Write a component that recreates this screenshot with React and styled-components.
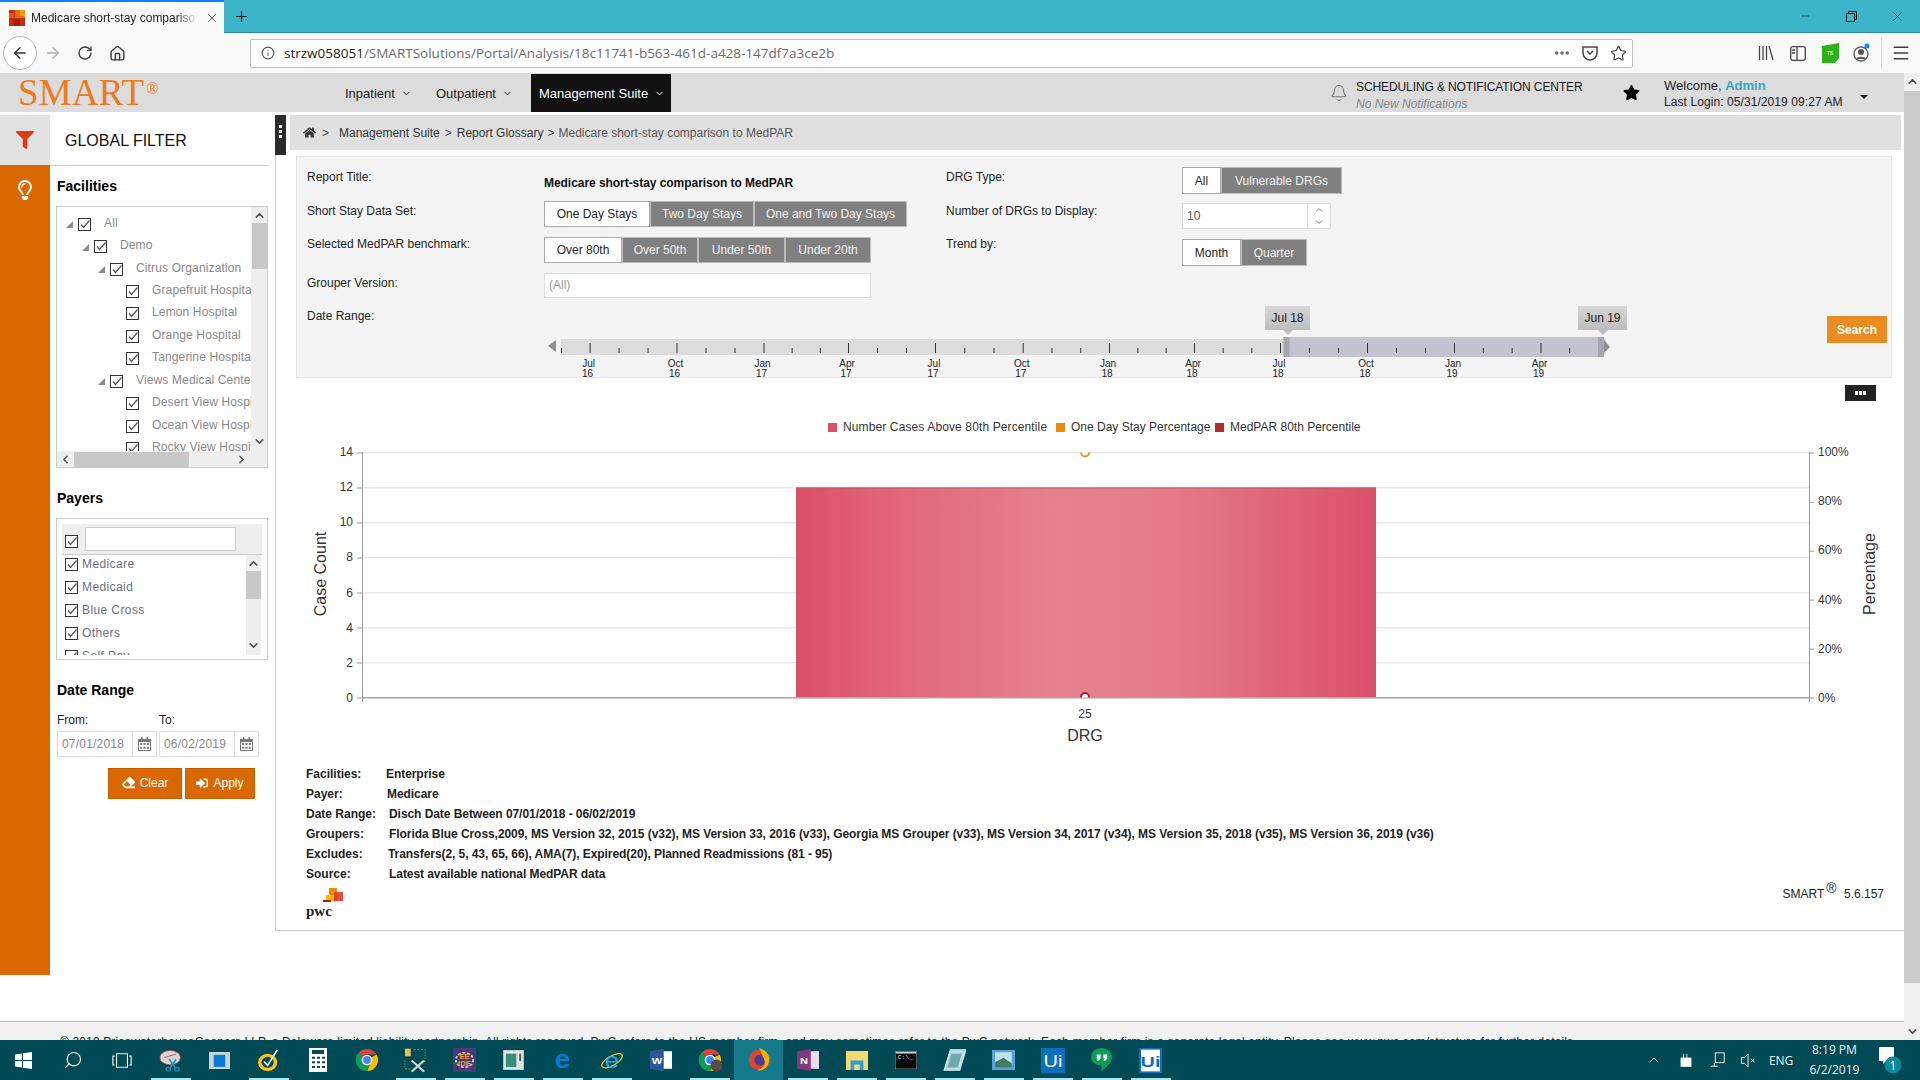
import React from 'react';
import styled, { createGlobalStyle } from 'styled-components';
import { ArrowLeft, ArrowRight, RotateCw, Home, Info, Ellipsis, Star, Menu, Minus, X, ChevronDown, ChevronUp, ChevronLeft, ChevronRight, Plus, Bell, Search as SearchIcon } from 'lucide-react';
import { FaHome, FaFilter, FaRegLightbulb, FaStar, FaEraser, FaSignInAlt } from 'react-icons/fa';

const GlobalStyle = createGlobalStyle`
  html, body { margin: 0; padding: 0; width: 1920px; height: 1080px; overflow: hidden; background: #fff; }
  * { box-sizing: border-box; }
  body { font-family: "Liberation Sans", Arial, sans-serif; font-size: 12px; color: #222; }
`;

const Screen = styled.div`
  width: 1920px;
  height: 1080px;
  display: flex;
  flex-direction: column;
  overflow: hidden;
`;

/* browser chrome */
const TitleBar = styled.div`
  height: 33px;
  flex: none;
  display: flex;
  background: #3cb5c8;
  border-bottom: 1px solid #2b8b9a;
`;
const Tab = styled.div`
  width: 224px;
  height: 33px;
  display: flex;
  align-items: center;
  padding-left: 9px;
  background: #f9f9fa;
  border-top: 2px solid #0a84ff;
  font-size: 12px;
  color: #222;
`;
const TabTitle = styled.div`
  width: 166px;
  margin-left: 6px;
  white-space: nowrap;
  overflow: hidden;
  mask-image: linear-gradient(to right, #000 88%, transparent);
`;
const TabClose = styled.div`
  margin-left: 8px;
  display: flex;
  color: #333;
`;
const NewTab = styled.div`
  width: 34px;
  display: flex;
  align-items: center;
  justify-content: center;
  color: #123;
`;
const WindowButtons = styled.div`
  margin-left: auto;
  display: flex;
`;
const WindowButton = styled.div`
  width: 46px;
  display: flex;
  align-items: center;
  justify-content: center;
  color: #111;
`;
const Toolbar = styled.div`
  height: 40px;
  flex: none;
  display: flex;
  align-items: center;
  background: #f9f9fa;
`;
const BackButton = styled.div`
  width: 34px;
  height: 34px;
  margin-left: 3px;
  border-radius: 50%;
  border: 1px solid #b4b4b4;
  background: #fff;
  display: flex;
  align-items: center;
  justify-content: center;
  color: #333;
`;
const ToolButton = styled.div`
  width: ${p => p.$w || 32}px;
  height: 30px;
  display: flex;
  align-items: center;
  justify-content: center;
  color: ${p => p.$color || '#3c3c3c'};
`;
const UrlBar = styled.div`
  width: 1383px;
  height: 29px;
  margin-left: 117px;
  padding-left: 10px;
  display: flex;
  align-items: center;
  background: #fff;
  border: 1px solid #bebebe;
  border-radius: 2px;
`;
const UrlText = styled.div`
  margin-left: 9px;
  font-family: "Open Sans", sans-serif;
  font-size: 13.5px;
  color: #6b6b6b;
  white-space: nowrap;
  b { font-weight: 400; color: #1a1a1a; }
`;
const UrlTools = styled.div`
  margin-left: auto;
  display: flex;
`;
const ToolGroup = styled.div`
  margin-left: 117px;
  display: flex;
  align-items: center;
`;
const ToolSep = styled.div`
  width: 1px;
  height: 32px;
  margin: 0 3px;
  background: #dcdcdc;
`;

/* page */
const PageArea = styled.div`
  height: 967px;
  flex: none;
  display: flex;
  overflow: hidden;
`;
const Page = styled.div`
  width: 1904px;
  flex: none;
  display: flex;
  flex-direction: column;
`;
const PageScroll = styled.div`
  width: 16px;
  flex: none;
  display: flex;
  flex-direction: column;
  align-items: center;
  background: #f0f0f0;
  color: #505050;
`;
const PageThumb = styled.div`
  width: 16px;
  height: 892px;
  margin-top: 2px;
  background: #cbcbcb;
`;
const PageArrow = styled.div`
  height: 16px;
  display: flex;
  align-items: center;
  margin-top: ${p => p.$top || 0}px;
`;

const Nav = styled.div`
  height: 39px;
  flex: none;
  display: flex;
  align-items: center;
  padding-right: 36px;
  background: #dcdcdc;
`;
const Logo = styled.div`
  width: 319px;
  margin: 1px 0 0 18px;
  font-family: "Liberation Serif", serif;
  font-size: 37px;
  line-height: 38px;
  letter-spacing: 0.2px;
  color: #ee7a1c;
  sup { font-size: 16px; line-height: 0; vertical-align: 11px; margin-left: 2px; }
`;
const NavItem = styled.div`
  width: ${p => p.$w}px;
  height: 38px;
  align-self: flex-end;
  padding-left: 8px;
  display: flex;
  align-items: center;
  gap: 6px;
  font-size: 13px;
  color: ${p => (p.$active ? '#fff' : '#1a1a1a')};
  background: ${p => (p.$active ? '#111' : 'transparent')};
`;
const NavRight = styled.div`
  margin-left: auto;
  display: flex;
  align-items: center;
`;
const Notify = styled.div`
  width: 228px;
  margin: 6px 0 0 8px;
  color: #1a1a1a;
  line-height: 17px;
  letter-spacing: -0.1px;
  white-space: nowrap;
`;
const Muted = styled.div`
  font-style: italic;
  color: #888;
  letter-spacing: 0;
`;
const NavStar = styled.div`
  width: 17px;
  margin-left: 39px;
  display: flex;
`;
const Welcome = styled.div`
  width: 180px;
  margin: 2px 0 0 24px;
  line-height: 17px;
  color: #222;
  font-size: 13px;
  white-space: nowrap;
  b { color: #36a6c6; }
  div { font-size: 12px; letter-spacing: 0.08px; }
`;
const DownCaret = styled.div`
  width: 8px;
  height: 4px;
  margin: 9px 0 0 16px;
  border-left: 4px solid transparent;
  border-right: 4px solid transparent;
  border-top: 4px solid #111;
`;

const BodyRow = styled.div`
  flex: none;
  height: 909px;
  padding-top: 3px;
  display: flex;
  align-items: flex-start;
`;
const Rail = styled.div`
  width: 50px;
  height: 860px;
  flex: none;
  background: #d96800;
`;
const RailTop = styled.div`
  height: 50px;
  display: flex;
  align-items: center;
  justify-content: center;
  background: #e2e2e2;
  color: #e03a10;
`;
const RailIcon = styled.div`
  margin-top: 15px;
  display: flex;
  justify-content: center;
  color: #fff;
`;

/* filter column */
const Side = styled.div`
  position: relative;
  width: 226px;
  height: 816px;
  flex: none;
  padding-left: 6px;
  border-right: 1px solid #ccc;
`;
const SideTitle = styled.div`
  height: 51px;
  margin-left: -6px;
  width: 220px;
  padding: 2px 0 0 15px;
  display: flex;
  align-items: center;
  border-bottom: 1px solid #ccc;
  font-size: 16px;
  color: #111;
`;
const Collapse = styled.div`
  position: absolute;
  top: 0;
  right: -11px;
  width: 11px;
  height: 40px;
  padding-top: 10px;
  display: flex;
  flex-direction: column;
  align-items: center;
  gap: 2px;
  background: #2b2b2b;
  i { width: 3px; height: 3px; background: #fff; }
`;
const SideHead = styled.div`
  height: 20px;
  margin: ${p => p.$top}px 0 10px 1px;
  font-size: 14px;
  font-weight: 700;
  line-height: 20px;
  color: #000;
`;
const TreeBox = styled.div`
  width: 212px;
  height: 262px;
  display: grid;
  grid-template-columns: 194px 16px;
  grid-template-rows: 244px 16px;
  border: 1px solid #ccc;
`;
const TreeView = styled.div`
  padding-top: 5px;
  overflow: hidden;
`;
const TreeRow = styled.div`
  height: 22.45px;
  padding-left: ${p => 9 + p.$depth * 16}px;
  display: flex;
  align-items: center;
  white-space: nowrap;
  color: #888;
  letter-spacing: 0.14px;
`;
const Twisty = styled.svg`
  width: 12px;
  height: 7px;
  flex: none;
  fill: #8a8a8a;
  margin-top: 3px;
`;
const CheckBox = styled.span`
  width: 13px;
  height: 13px;
  flex: none;
  display: flex;
  background: #fff;
  border: 1px solid #333;
  margin-top: ${p => p.$top || 0}px;
`;
const TreeLabel = styled.span`
  margin: -1px 0 0 13px;
`;
const VBar = styled.div`
  display: flex;
  flex-direction: column;
  align-items: center;
  background: #eee;
  color: #555;
`;
const ScrollArrow = styled.div`
  height: 16px;
  flex: none;
  display: flex;
  align-items: center;
  margin-top: ${p => p.$top || 0}px;
`;
const VThumb = styled.div`
  width: 15px;
  height: ${p => p.$h}px;
  flex: none;
  background: #c8c8c8;
`;
const HBar = styled.div`
  display: flex;
  align-items: center;
  background: #eee;
  color: #555;
`;
const HThumb = styled.div`
  width: 115px;
  height: 15px;
  flex: none;
  margin: 0 46px 0 2px;
  background: #c8c8c8;
`;
const ScrollSide = styled.div`
  width: 13px;
  flex: none;
  margin-left: ${p => p.$left || 0}px;
  display: flex;
  justify-content: center;
`;
const Corner = styled.div`
  background: #eee;
`;
const PayerBox = styled.div`
  width: 212px;
  height: 142px;
  padding: 5px;
  border: 1px solid #ccc;
`;
const PayerHead = styled.div`
  height: 31px;
  padding: 3px 0 0 3px;
  display: flex;
  background: #eee;
  border-bottom: 1px solid #ccc;
`;
const PayerInput = styled.div`
  width: 151px;
  height: 24px;
  margin-left: 7px;
  background: #fff;
  border: 1px solid #ccc;
`;
const PayerBody = styled.div`
  display: flex;
  height: 100px;
`;
const PayerList = styled.div`
  flex: 1;
  padding: 3px 0 0 3px;
  overflow: hidden;
`;
const PayerRow = styled.div`
  height: 23px;
  display: flex;
  align-items: flex-start;
  color: #6a7080;
  letter-spacing: 0.4px;
  span:last-child { margin: -1px 0 0 4px; }
`;
const PayerBar = styled(VBar)`
  width: 15px;
  margin-right: 1px;
`;
const DateLabels = styled.div`
  display: flex;
  margin: 13px 0 4px 1px;
  line-height: 14px;
  color: #222;
  span { width: 102px; }
`;
const DateRow = styled.div`
  display: flex;
  gap: 2px;
  margin-left: 1px;
`;
const DateField = styled.div`
  width: 100px;
  height: 26px;
  display: flex;
  border: 1px solid #ddd;
  color: #888;
  letter-spacing: 0.2px;
`;
const DateText = styled.div`
  width: 75px;
  padding-left: 4px;
  line-height: 24px;
  border-right: 1px solid #ddd;
`;
const DateIcon = styled.div`
  flex: 1;
  display: flex;
  align-items: center;
  justify-content: center;
`;
const ButtonRow = styled.div`
  display: flex;
  gap: 3px;
  margin: 11px 0 0 52px;
`;
const OrangeButton = styled.div`
  width: ${p => p.$w}px;
  height: 31px;
  padding-bottom: 2px;
  display: flex;
  align-items: center;
  justify-content: center;
  gap: 5px;
  background: #d96800;
  border: 1px solid #c96000;
  color: #fff;
`;

/* main column */
const Main = styled.div`
  width: 1628px;
  height: 816px;
  flex: none;
  border-bottom: 1px solid #ccc;
  display: flex;
  flex-direction: column;
`;
const Crumbs = styled.div`
  height: 35px;
  flex: none;
  margin: 0 3px 0 14px;
  padding-left: 13px;
  display: flex;
  align-items: center;
  background: #e0e0e0;
  color: #333;
  white-space: nowrap;
`;
const CrumbSep = styled.span`
  margin: 0 ${p => p.$gap || 5}px;
  color: #444;
`;
const CrumbHome = styled.span`
  display: flex;
  margin-right: 1px;
  color: #333;
`;
const CrumbFirst = styled.span`
  margin-left: 5px;
`;
const CrumbLast = styled.span`
  color: #555;
`;
const FilterPanel = styled.div`
  height: 222px;
  flex: none;
  margin: 6px 12px 0 20px;
  padding: 10px 0 0 10px;
  display: flex;
  flex-direction: column;
  background: #f4f4f4;
  border: 1px solid #e4e4e4;
`;
const FormTop = styled.div`
  height: 139px;
  flex: none;
  display: flex;
`;
const FormCol = styled.div`
  width: ${p => p.$w}px;
  flex: none;
`;
const FormRow = styled.div`
  height: ${p => p.$h}px;
  display: flex;
`;
const FormLabel = styled.div`
  width: ${p => p.$w || 237}px;
  flex: none;
  padding-top: ${p => p.$top}px;
  line-height: 14px;
  color: #222;
`;
const ReportName = styled.div`
  padding-top: 9px;
  line-height: 14px;
  font-weight: 700;
  letter-spacing: -0.05px;
  color: #111;
`;
const SegGroup = styled.div`
  display: flex;
  height: ${p => p.$h}px;
  margin-top: ${p => p.$top || 0}px;
`;
const Seg = styled.div`
  width: ${p => p.$w}px;
  display: flex;
  align-items: center;
  justify-content: center;
  background: ${p => (p.$on ? '#fff' : '#808080')};
  color: ${p => (p.$on ? '#222' : '#f2f2f2')};
  border: 1px solid ${p => (p.$on ? '#aaa' : '#bcbcbc')};
`;
const GrouperInput = styled.div`
  width: 327px;
  height: 25px;
  padding-left: 4px;
  line-height: 23px;
  background: #fff;
  border: 1px solid #ddd;
  color: #999;
`;
const Spinner = styled.div`
  width: 149px;
  height: 26px;
  display: flex;
  background: #fff;
  border: 1px solid #ddd;
  color: #555;
`;
const SpinValue = styled.div`
  width: 125px;
  padding-left: 4px;
  line-height: 24px;
  border-right: 1px solid #ddd;
`;
const SpinArrows = styled.div`
  flex: 1;
  display: flex;
  flex-direction: column;
  align-items: center;
  justify-content: center;
`;
const SliderRow = styled.div`
  flex: 1;
  display: flex;
`;
const SliderLabel = styled.div`
  width: 241px;
  flex: none;
  padding-top: 3px;
  line-height: 14px;
  color: #222;
`;
const SliderBox = styled.div`
  position: relative;
  width: 1075px;
  flex: none;
  padding-top: 27px;
  svg { display: block; }
`;
const SliderTip = styled.div`
  position: absolute;
  top: 0;
  left: ${p => p.$left}px;
  width: ${p => p.$w}px;
  height: 24px;
  display: flex;
  align-items: center;
  justify-content: center;
  background: linear-gradient(#d6d6d6, #bdbdbd);
  color: #222;
  &::after {
    content: '';
    position: absolute;
    left: 50%;
    bottom: -5px;
    margin-left: -5px;
    border-left: 5px solid transparent;
    border-right: 5px solid transparent;
    border-top: 5px solid #bdbdbd;
  }
`;
const SearchButton = styled.div`
  width: 60px;
  height: 27px;
  margin: 10px 0 0 204px;
  display: flex;
  align-items: center;
  justify-content: center;
  background: #e98c22;
  color: #fff;
  font-weight: 700;
  font-size: 12px;
`;
const DotsRow = styled.div`
  display: flex;
  justify-content: flex-end;
  margin-top: 7px;
  padding-right: 28px;
`;
const DotsButton = styled.div`
  width: 31px;
  height: 16px;
  display: flex;
  align-items: center;
  justify-content: center;
  gap: 1px;
  background: #222;
  i { width: 3px; height: 4px; background: #fff; }
`;
const Legend = styled.div`
  height: 14px;
  margin-top: 19px;
  padding-left: 552px;
  display: flex;
  align-items: center;
  color: #333;
  line-height: 14px;
  white-space: nowrap;
`;
const LegendItem = styled.div`
  display: flex;
  align-items: center;
  gap: 6px;
  width: ${p => p.$w}px;
  letter-spacing: ${p => p.$ls || 0}px;
`;
const LegendMark = styled.i`
  width: 9px;
  height: 9px;
  background: ${p => p.$color};
`;
const ChartSvg = styled.svg`
  display: block;
  margin-top: 6px;
  flex: none;
  font-family: "Liberation Sans", Arial, sans-serif;
`;
const InfoBlock = styled.div`
  margin-top: 14px;
  padding-left: 30px;
`;
const InfoRow = styled.div`
  height: 20px;
  display: flex;
  align-items: center;
  font-weight: 700;
  color: #222;
  white-space: nowrap;
`;
const InfoKey = styled.div`
  width: ${p => p.$w}px;
  flex: none;
`;
const InfoValue = styled.div`
  letter-spacing: -0.06px;
`;
const MainFoot = styled.div`
  height: 42px;
  padding: 4px 20px 0 30px;
  display: flex;
  justify-content: space-between;
`;
const PwcText = styled.text`
  font-family: "Liberation Serif", serif;
  font-weight: 700;
  font-size: 15px;
`;
const Version = styled.div`
  margin-top: -1px;
  color: #222;
  white-space: nowrap;
  sup { font-size: 14px; line-height: 0; margin: 0 4px 0 2px; }
`;
const Legal = styled.div`
  flex: none;
  padding: 13px 0 0 60px;
  height: 40px;
  background: #f1f1f1;
  border-top: 1px solid #bbb;
  color: #222;
  letter-spacing: 0.14px;
  white-space: nowrap;
`;

/* taskbar */
const Taskbar = styled.div`
  height: 40px;
  flex: none;
  display: flex;
  background: #004a56;
  color: #fff;
`;
const TaskSlot = styled.div`
  position: relative;
  width: 49px;
  height: 40px;
  flex: none;
  display: flex;
  align-items: center;
  justify-content: center;
  background: ${p => (p.$active ? '#147a8c' : 'transparent')};
  &:first-child { margin-left: -1px; }
  &::after {
    content: '';
    display: ${p => (p.$running ? 'block' : 'none')};
    position: absolute;
    left: 5px;
    right: 4px;
    bottom: 0;
    height: 2px;
    background: #a6e6ee;
  }
`;
const Tray = styled.div`
  margin-left: auto;
  width: 281px;
  padding-right: 18px;
  display: flex;
  align-items: center;
  font-family: "Open Sans", sans-serif;
  font-size: 12px;
  color: #e8f2f3;
`;
const TrayIcon = styled.div`
  width: ${p => p.$w}px;
  display: flex;
  justify-content: center;
`;
const Clock = styled.div`
  width: 66px;
  margin-left: 4px;
  text-align: center;
  line-height: 20px;
`;
const TrayNote = styled.div`
  margin-left: 11px;
  display: flex;
`;

const Tick = () => (
  <svg width="11" height="11" viewBox="0 0 11 11">
    <path d="M2 5.5 L4.5 8.5 L10.5 1.5" fill="none" stroke="#555" strokeWidth="1.2" />
  </svg>
);

const Check = ({ top }) => (
  <CheckBox $top={top}><Tick /></CheckBox>
);

const ThinArrow = ({ up }) => (up ? <ChevronUp size={13} strokeWidth={3} /> : <ChevronDown size={13} strokeWidth={3} />);

const Calendar = () => (
  <svg width="13" height="14" viewBox="0 0 13 14" fill="#777">
    <path d="M0 2h13v12H0z M1 5v8h11V5z" fillRule="evenodd" />
    <path d="M3 0h1.5v3H3zM8.5 0H10v3H8.5z" />
    <path d="M2.2 6h2v2h-2zM5.5 6h2v2h-2zM8.8 6h2v2h-2zM2.2 9.700h2v2h-2zM5.5 9.700h2v2h-2zM8.800 9.700h2v2h-2z" />
  </svg>
);

const treeRows = [
  { depth: 0, text: 'All', open: true },
  { depth: 1, text: 'Demo', open: true },
  { depth: 2, text: 'Citrus Organization', open: true },
  { depth: 2, text: 'Grapefruit Hospital', leaf: true },
  { depth: 2, text: 'Lemon Hospital', leaf: true },
  { depth: 2, text: 'Orange Hospital', leaf: true },
  { depth: 2, text: 'Tangerine Hospital', leaf: true },
  { depth: 2, text: 'Views Medical Center', open: true },
  { depth: 2, text: 'Desert View Hospital', leaf: true },
  { depth: 2, text: 'Ocean View Hospital', leaf: true },
  { depth: 2, text: 'Rocky View Hospital', leaf: true },
];

const payers = ['Medicare', 'Medicaid', 'Blue Cross', 'Others', 'Self Pay'];

const sliderTicks = [
  [589.6, 'Jul', '16'], [676.5, 'Oct', '16'], [763.5, 'Jan', '17'], [848, 'Apr', '17'],
  [935, 'Jul', '17'], [1022.7, 'Oct', '17'], [1109, 'Jan', '18'], [1194, 'Apr', '18'],
  [1280, 'Jul', '18'], [1367, 'Oct', '18'], [1454, 'Jan', '19'], [1540.5, 'Apr', '19'],
];

const SliderScale = () => {
  const sx = x => x - 548;
  const minors = [561];
  sliderTicks.forEach(([x], i) => {
    const next = sliderTicks[i + 1] ? sliderTicks[i + 1][0] : x + 86;
    minors.push(x + (next - x) / 3);
    if (i < sliderTicks.length - 1) minors.push(x + ((next - x) * 2) / 3);
  });
  return (
    <svg width="1075" height="44" viewBox="0 0 1075 44">
      <rect x="13" y="6" width="1045" height="16" fill="#dcdcdc" />
      <rect x="735.500" y="4" width="320.500" height="20" fill="#c3c4d0" />
      <polygon points="0,13 8,7 8,19" fill="#8f8f8f" />
      {minors.map(x => <rect key={x} x={sx(x)} y="15" width="1" height="5" fill="#333" />)}
      {sliderTicks.map(([x, m, y]) => (
        <g key={x}>
          <rect x={sx(x)} y="10" width="1" height="10" fill="#333" />
          <text x={sx(x) - 1} y="33.500" fontSize="10" textAnchor="middle" fill="#222">{m}</text>
          <text x={sx(x) - 2} y="43.500" fontSize="10" textAnchor="middle" fill="#222">{y}</text>
        </g>
      ))}
      <rect x="735.500" y="4" width="6" height="20" fill="#a5a6ae" />
      <rect x="1050" y="4" width="6" height="20" fill="#a5a6ae" />
      <polygon points="1056,7 1062,14 1056,20" fill="#8f8f8f" />
    </svg>
  );
};

const ChartArea = () => {
  const cx = x => x - 276;
  const cy = y => y - 440;
  const counts = [14, 12, 10, 8, 6, 4, 2, 0];
  const pct = [[100, 452.5, 451.8], [80, 501.8, 501], [60, 550.7, 549.6], [40, 599.6, 599.6], [20, 648.6, 648.6], [0, 697.5, 697.5]];
  const yOf = v => 697.5 - v * 17.5;
  return (
    <ChartSvg width="1627" height="310" viewBox="0 0 1627 310">
      <defs>
        <linearGradient id="barFill" x1="0" x2="1" y1="0" y2="0">
          <stop offset="0" stopColor="#da4e68" />
          <stop offset="0.15" stopColor="#e0647a" />
          <stop offset="0.45" stopColor="#e6828f" />
          <stop offset="0.65" stopColor="#e47a8a" />
          <stop offset="1" stopColor="#da5069" />
        </linearGradient>
        <clipPath id="plotClip">
          <rect x={cx(362)} y={cy(452.5)} width="1447" height="245" />
        </clipPath>
      </defs>
      {counts.map(v => (
        <g key={v}>
          <rect x={cx(362)} y={cy(yOf(v)) - 0.5} width="1447" height="1.5" fill="#e8e8e8" />
          <rect x={cx(357)} y={cy(yOf(v))} width="5" height="1" fill="#999" />
          <text x={cx(353)} y={cy(yOf(v)) + (v > 6 ? 3.500 : 4.500)} fontSize="12" textAnchor="end" fill="#333">{v}</text>
        </g>
      ))}
      <rect x={cx(796)} y={cy(487.5)} width="580" height="210" fill="url(#barFill)" />
      <rect x={cx(796)} y={cy(487.5)} width="580" height="1" fill="#c9586c" />
      <rect x={cx(362)} y={cy(697)} width="1447" height="1.5" fill="#a8a8a8" />
      <rect x={cx(362)} y={cy(452)} width="1" height="250" fill="#999" />
      <rect x={cx(1809)} y={cy(452)} width="1" height="250" fill="#999" />
      {pct.map(([v, y, ly]) => (
        <g key={v}>
          <rect x={cx(1809)} y={cy(y)} width="5" height="1" fill="#999" />
          <text x={cx(1818)} y={cy(ly) + 4} fontSize="12" fill="#333">{v}%</text>
        </g>
      ))}
      <g clipPath="url(#plotClip)" fill="#fff" strokeWidth="2">
        <circle cx={cx(1085)} cy={cy(452.5)} r="4" stroke="#e8941f" />
        <circle cx={cx(1085)} cy={cy(697)} r="4" stroke="#a8232f" />
      </g>
      <text x={cx(1085)} y={cy(718)} fontSize="12" textAnchor="middle" fill="#333">25</text>
      <text x={cx(1085)} y={cy(741)} fontSize="16" textAnchor="middle" fill="#333">DRG</text>
      <text transform={`translate(${cx(326)} ${cy(574)}) rotate(-90)`} fontSize="16" textAnchor="middle" fill="#333">Case Count</text>
      <text transform={`translate(${cx(1875)} ${cy(574)}) rotate(-90)`} fontSize="16" textAnchor="middle" fill="#333">Percentage</text>
    </ChartSvg>
  );
};

const PwcLogo = () => (
  <svg width="40" height="32" viewBox="0 0 40 32">
    <rect x="23" y="0" width="8" height="13" fill="#eb8c00" />
    <rect x="28" y="4" width="9" height="9" fill="#e0301e" opacity="0.85" />
    <rect x="20" y="7" width="8" height="6" fill="#ffb600" />
    <rect x="17" y="12" width="8" height="2" fill="#a32020" />
    <PwcText x="0" y="28" fill="#222">pwc</PwcText>
  </svg>
);

/* taskbar glyphs, drawn wide and squeezed to the size the reference shows */
const Glyph = ({ w, h, vw, vh, children }) => (
  <svg width={w} height={h} viewBox={`0 0 ${vw} ${vh}`} preserveAspectRatio="none">{children}</svg>
);

const Win = () => (
  <svg width="17" height="17" viewBox="0 0 17 17" fill="#fff">
    <path d="M0 2.400 7 1.400V8H0zM8 1.200 17 0V8H8zM0 9h7v6.600L0 14.600zM8 9h9v8L8 15.800z" />
  </svg>
);
const TaskView = () => (
  <Glyph w={20} h={15} vw={22} vh={20}>
    <g fill="none" stroke="#fff" strokeWidth="1.200">
      <rect x="5" y="1" width="12" height="18" />
      <path d="M3 4H1v12h2M19 4h2v12h-2" />
    </g>
  </Glyph>
);
const Snip = () => (
  <Glyph w={24} h={23} vw={28} vh={32}>
    <ellipse cx="13" cy="12" rx="12" ry="10" fill="#d6d6d6" stroke="#c43a3a" strokeWidth="1" />
    <path d="M6 12 20 7" stroke="#c43a3a" />
    <path d="M12 14 20 28M20 14 12 28" stroke="#1d8fc0" strokeWidth="2" />
    <circle cx="11" cy="28" r="2.500" fill="none" stroke="#1d8fc0" strokeWidth="1.500" />
    <circle cx="21" cy="28" r="2.500" fill="none" stroke="#1d8fc0" strokeWidth="1.500" />
  </Glyph>
);
const BlueWin = () => (
  <Glyph w={21} h={17} vw={22} vh={24}>
    <rect width="22" height="24" fill="#c9d3d8" />
    <rect x="5" y="4" width="12" height="17" fill="#0a78d7" />
  </Glyph>
);
const Norton = () => (
  <Glyph w={21} h={22} vw={24} vh={28}>
    <circle cx="11" cy="17" r="9" fill="none" stroke="#ffc20e" strokeWidth="4" />
    <path d="M7 16 11 21 22 1" fill="none" stroke="#fff" strokeWidth="1.800" />
  </Glyph>
);
const Calc = () => (
  <Glyph w={18} h={24} vw={18} vh={36}>
    <path fill="#fff" d="M0 0h18v36H0z M3 3v6h12V3z M3 13v3h3v-3z M8 13v3h3v-3z M13 13v3h3v-3z M3 20v3h3v-3z M8 20v3h3v-3z M13 20v3h3v-3z M3 27v3h3v-3z M8 27v3h3v-3z M13 27v3h3v-3z" fillRule="evenodd" />
  </Glyph>
);
const Chrome = ({ person }) => (
  <svg width="24" height="24" viewBox="0 0 26 26">
    <path d="M13 1A12 12 0 0 1 23.400 7H13a6 6 0 0 0-5.200 3L4.500 4.500A12 12 0 0 1 13 1z" fill="#db4437" />
    <path d="M23.400 7A12 12 0 0 1 13 25l4-9a6 6 0 0 0 1-6z" fill="#fbbc05" />
    <path d="M13 25A12 12 0 0 1 4.500 4.500L8 10a6 6 0 0 0 8 6.600z" fill="#0f9d58" />
    <circle cx="13" cy="13" r="5" fill="#4285f4" stroke="#fff" strokeWidth="1.500" />
    {person && <circle cx="20" cy="19" r="6.500" fill="#5a4a44" />}
  </svg>
);
const Tools = () => (
  <Glyph w={23} h={25} vw={24} vh={36}>
    <rect x="1" y="1" width="6" height="11" fill="#e8c24a" />
    <path d="M10 2h12v18M1 18v12h8" fill="none" stroke="#7dbb42" strokeDasharray="2 2" />
    <path d="M8 34 21 18M21 34 8 18" stroke="#d8d8d8" strokeWidth="2.500" />
  </Glyph>
);
const JavaEE = () => (
  <Glyph w={23} h={24} vw={24} vh={30}>
    <rect width="24" height="30" fill="#4a3a78" />
    <circle cx="12" cy="15" r="9" fill="none" stroke="#ccc" strokeWidth="2" strokeDasharray="3 2" />
    <text x="12" y="14" fontSize="8" fontWeight="700" textAnchor="middle" fill="#f59a23">EE</text>
    <text x="12" y="22" fontSize="8" fontWeight="700" textAnchor="middle" fill="#f59a23">IDE</text>
  </Glyph>
);
const GreenWin = () => (
  <Glyph w={21} h={20} vw={22} vh={27}>
    <rect width="22" height="27" fill="#dfe6e6" stroke="#999" />
    <rect x="3" y="5" width="11" height="18" fill="#3a8c7d" />
    <rect x="17" y="5" width="2" height="10" fill="#555" />
  </Glyph>
);
const Edge = () => (
  <Glyph w={21} h={24} vw={24} vh={30}>
    <text x="12" y="25" fontSize="32" fontWeight="700" textAnchor="middle" fill="#0a78d7">e</text>
  </Glyph>
);
const Ie = () => (
  <Glyph w={24} h={24} vw={28} vh={32}>
    <ellipse cx="14" cy="17" rx="14" ry="6" fill="none" stroke="#f0c020" strokeWidth="1.500" transform="rotate(-35 14 17)" />
    <text x="14" y="26" fontSize="30" textAnchor="middle" fill="#2aa6e0">e</text>
  </Glyph>
);
const Word = () => (
  <Glyph w={22} h={22} vw={24} vh={30}>
    <rect x="10" y="3" width="14" height="24" fill="#fff" />
    <path d="M0 3 15 0V30L0 27z" fill="#2b579a" />
    <text x="7.500" y="20" fontSize="12" fontWeight="700" textAnchor="middle" fill="#fff">W</text>
  </Glyph>
);
const Firefox = () => (
  <svg width="24" height="24" viewBox="0 4 24 26">
    <circle cx="12" cy="17" r="11" fill="#e0452c" />
    <circle cx="13" cy="17" r="6" fill="#4a3a9a" />
    <path d="M12 4C20 6 26 14 22 22 20 27 14 29 10 28 18 26 20 20 17 15 15 11 14 8 12 4z" fill="#ffb000" />
  </svg>
);
const OneNote = () => (
  <Glyph w={22} h={22} vw={24} vh={30}>
    <rect x="10" y="3" width="14" height="24" fill="#e8dcee" />
    <path d="M0 3 15 0V30L0 27z" fill="#80397b" />
    <text x="7.500" y="20" fontSize="12" fontWeight="700" textAnchor="middle" fill="#fff">N</text>
  </Glyph>
);
const Explorer = () => (
  <Glyph w={22} h={19} vw={24} vh={28}>
    <rect width="24" height="28" fill="#f8d775" />
    <rect x="5" y="14" width="14" height="14" fill="#2a9fd8" />
    <rect x="9" y="20" width="6" height="8" fill="#f8d775" />
  </Glyph>
);
const Cmd = () => (
  <Glyph w={22} h={18} vw={24} vh={28}>
    <rect width="24" height="28" fill="#0b0b0b" stroke="#bbb" />
    <rect x="1" y="1" width="22" height="3" fill="#cfcfcf" />
    <text x="3" y="13" fontSize="7" fontFamily="Liberation Mono" fill="#ddd">C:\_</text>
  </Glyph>
);
const Note = () => (
  <Glyph w={23} h={22} vw={22} vh={32}>
    <path d="M7 1h15l-6 30H1z" fill="#b8dfe6" stroke="#ddeff2" />
    <path d="M8 7h10l-4 20H4z" fill="#6fa8b0" />
  </Glyph>
);
const Photo = () => (
  <Glyph w={23} h={20} vw={22} vh={28}>
    <rect width="22" height="28" fill="#5aa0d8" />
    <rect x="3" y="3" width="16" height="22" fill="#bfe0e8" />
    <path d="M3 17 11 11 19 19V25H3z" fill="#3d7d66" />
  </Glyph>
);
const UiBlue = () => (
  <Glyph w={24} h={25} vw={24} vh={31}>
    <rect width="24" height="31" fill="#0a6fbe" />
    <text x="12" y="23" fontSize="20" textAnchor="middle" fill="#fff">Ui</text>
  </Glyph>
);
const Hangouts = () => (
  <Glyph w={21} h={24} vw={22} vh={30}>
    <path d="M11 0a11 11 0 0 1 11 11c0 8-6 13-11 18V22A11 11 0 0 1 11 0z" fill="#0f9d58" />
    <path d="M6 8h4v5l-2 3H6l1-3H6zM13 8h4v5l-2 3h-2l1-3h-1z" fill="#fff" />
  </Glyph>
);
const UiWhite = () => (
  <Glyph w={23} h={25} vw={22} vh={31}>
    <rect x="1" y="1" width="20" height="29" fill="#fff" stroke="#0a6fbe" strokeWidth="2" />
    <text x="11" y="23" fontSize="19" fontWeight="700" textAnchor="middle" fill="#0a6fbe">Ui</text>
  </Glyph>
);
const SearchGlyph = () => <SearchIcon size={20} strokeWidth={1.4} color="#fff" transform="scale(-1 1)" />;
const PersonChrome = () => <Chrome person />;

const taskItems = [
  { Icon: Win },
  { Icon: SearchGlyph },
  { Icon: TaskView },
  { Icon: Snip, running: true },
  { Icon: BlueWin },
  { Icon: Norton, running: true },
  { Icon: Calc },
  { Icon: Chrome },
  { Icon: Tools, running: true },
  { Icon: JavaEE, running: true },
  { Icon: GreenWin, running: true },
  { Icon: Edge, running: true },
  { Icon: Ie, running: true },
  { Icon: Word },
  { Icon: PersonChrome, running: true },
  { Icon: Firefox, active: true },
  { Icon: OneNote, running: true },
  { Icon: Explorer, running: true },
  { Icon: Cmd, running: true },
  { Icon: Note, running: true },
  { Icon: Photo, running: true },
  { Icon: UiBlue, running: true },
  { Icon: Hangouts, running: true },
  { Icon: UiWhite, running: true },
];

const App = () => (
  <Screen>
    <GlobalStyle />
    <TitleBar>
      <Tab>
        <svg width="16" height="16" viewBox="0 0 16 16">
          <rect width="16" height="16" fill="#c92a08" />
          <rect width="10" height="8" x="6" fill="#e8700c" />
          <rect width="5" height="6" x="11" fill="#f09a18" />
          <rect width="5" height="5" y="3" fill="#e2541a" />
          <rect width="6" height="7" x="5" y="9" fill="#a81e05" />
        </svg>
        <TabTitle>Medicare short-stay comparison to MedPAR</TabTitle>
        <TabClose><X size={14} strokeWidth={1.4} /></TabClose>
      </Tab>
      <NewTab><Plus size={17} strokeWidth={1.6} /></NewTab>
      <WindowButtons>
        <WindowButton><Minus size={12} strokeWidth={1.2} /></WindowButton>
        <WindowButton>
          <svg width="11" height="11" viewBox="0 0 11 11" fill="none" stroke="#111">
            <rect x="0.500" y="2.500" width="8" height="8" />
            <path d="M2.500 2.500v-2h8v8h-2" />
          </svg>
        </WindowButton>
        <WindowButton><X size={15} strokeWidth={1} /></WindowButton>
      </WindowButtons>
    </TitleBar>
    <Toolbar>
      <BackButton><ArrowLeft size={18} strokeWidth={1.8} /></BackButton>
      <ToolButton $color="#b0b0b0"><ArrowRight size={18} strokeWidth={1.8} /></ToolButton>
      <ToolButton><RotateCw size={16} strokeWidth={2} /></ToolButton>
      <ToolButton><Home size={17} strokeWidth={2} /></ToolButton>
      <UrlBar>
        <Info size={14} color="#555" />
        <UrlText><b>strzw058051</b>/SMARTSolutions/Portal/Analysis/18c11741-b563-461d-a428-147df7a3ce2b</UrlText>
        <UrlTools>
          <ToolButton $w={28}><Ellipsis size={18} strokeWidth={2.6} color="#666" /></ToolButton>
          <ToolButton $w={28}>
            <svg width="16" height="16" viewBox="0 0 16 16" fill="none" stroke="#444" strokeWidth="1.500">
              <path d="M1 2h14v6a7 7 0 0 1-14 0z" />
              <path d="M5 6l3 3 3-3" />
            </svg>
          </ToolButton>
          <ToolButton $w={28}><Star size={17} strokeWidth={1.6} /></ToolButton>
        </UrlTools>
      </UrlBar>
      <ToolGroup>
        <ToolButton>
          <svg width="16" height="16" viewBox="0 0 16 16" fill="none" stroke="#444" strokeWidth="1.300">
            <path d="M1.500 1v14M5 1v14M8.500 1v14M11 1l4 14" />
          </svg>
        </ToolButton>
        <ToolButton>
          <svg width="16" height="15" viewBox="0 0 16 15" fill="none" stroke="#444" strokeWidth="1.300">
            <rect x="0.700" y="0.700" width="14.600" height="13.600" rx="2" />
            <path d="M7 1v13M2 4h3M2 7h3" />
          </svg>
        </ToolButton>
        <ToolButton>
          <svg width="17" height="20" viewBox="0 0 17 20">
            <path d="M0 3 17 0V15L13 20H0z" fill="#2bb215" />
            <text x="8" y="12" fontSize="5" fontWeight="700" textAnchor="middle" fill="#d5f5c8">TS</text>
          </svg>
        </ToolButton>
        <ToolButton>
          <svg width="18" height="20" viewBox="0 0 18 20" fill="none">
            <circle cx="8" cy="11" r="7" stroke="#666" strokeWidth="1.500" />
            <circle cx="8" cy="9" r="3" fill="#555" />
            <path d="M3 16c1-3 9-3 10 0" fill="#555" />
            <circle cx="14" cy="3" r="2.500" fill="#0a84ff" />
          </svg>
        </ToolButton>
        <ToolSep />
        <ToolButton><Menu size={20} strokeWidth={1.8} /></ToolButton>
      </ToolGroup>
    </Toolbar>

    <PageArea>
      <Page>
        <Nav>
          <Logo>SMART<sup>®</sup></Logo>
          <NavItem $w={91}>Inpatient <ChevronDown size={11} strokeWidth={2} /></NavItem>
          <NavItem $w={103}>Outpatient <ChevronDown size={11} strokeWidth={2} /></NavItem>
          <NavItem $w={140} $active>Management Suite <ChevronDown size={11} strokeWidth={2} /></NavItem>
          <NavRight>
            <Bell size={18} strokeWidth={1.5} color="#777" />
            <Notify>
              SCHEDULING &amp; NOTIFICATION CENTER
              <Muted>No New Notifications</Muted>
            </Notify>
            <NavStar><FaStar size={17} color="#000" /></NavStar>
            <Welcome>
              Welcome, <b>Admin</b>
              <div>Last Login: 05/31/2019 09:27 AM</div>
            </Welcome>
            <DownCaret />
          </NavRight>
        </Nav>

        <BodyRow>
          <Rail>
            <RailTop><FaFilter size={18} /></RailTop>
            <RailIcon><FaRegLightbulb size={20} /></RailIcon>
          </Rail>

          <Side>
            <SideTitle>GLOBAL FILTER</SideTitle>
            <Collapse><i /><i /><i /></Collapse>

            <SideHead $top={10}>Facilities</SideHead>
            <TreeBox>
              <TreeView>
                {treeRows.map(row => (
                  <TreeRow key={row.text} $depth={row.depth + (row.leaf ? 1 : 0)}>
                    {row.leaf ? <Twisty as="span" /> : (
                      <Twisty viewBox="0 0 12 7"><polygon points="7,0 7,7 0,7" /></Twisty>
                    )}
                    <Check top={2} />
                    <TreeLabel>{row.text}</TreeLabel>
                  </TreeRow>
                ))}
              </TreeView>
              <VBar>
                <ScrollArrow><ThinArrow up /></ScrollArrow>
                <VThumb $h={46} />
                <ScrollArrow $top={164}><ThinArrow /></ScrollArrow>
              </VBar>
              <HBar>
                <ScrollSide $left={2}><ChevronLeft size={13} strokeWidth={3} /></ScrollSide>
                <HThumb />
                <ScrollSide><ChevronRight size={13} strokeWidth={3} /></ScrollSide>
              </HBar>
              <Corner />
            </TreeBox>

            <SideHead $top={20}>Payers</SideHead>
            <PayerBox>
              <PayerHead>
                <Check top={8} />
                <PayerInput />
              </PayerHead>
              <PayerBody>
                <PayerList>
                  {payers.map(p => (
                    <PayerRow key={p}><Check /><span>{p}</span></PayerRow>
                  ))}
                </PayerList>
                <PayerBar>
                  <ScrollArrow><ThinArrow up /></ScrollArrow>
                  <VThumb $h={28} />
                  <ScrollArrow $top={38}><ThinArrow /></ScrollArrow>
                </PayerBar>
              </PayerBody>
            </PayerBox>

            <SideHead $top={20}>Date Range</SideHead>
            <DateLabels><span>From:</span><span>To:</span></DateLabels>
            <DateRow>
              <DateField><DateText>07/01/2018</DateText><DateIcon><Calendar /></DateIcon></DateField>
              <DateField><DateText>06/02/2019</DateText><DateIcon><Calendar /></DateIcon></DateField>
            </DateRow>
            <ButtonRow>
              <OrangeButton $w={74}><FaEraser size={13} /> Clear</OrangeButton>
              <OrangeButton $w={70}><FaSignInAlt size={12} /> Apply</OrangeButton>
            </ButtonRow>
          </Side>

          <Main>
            <Crumbs>
              <CrumbHome><FaHome size={13} /></CrumbHome>
              <CrumbSep>&gt;</CrumbSep>
              <CrumbFirst>Management Suite</CrumbFirst>
              <CrumbSep>&gt;</CrumbSep>
              <span>Report Glossary</span>
              <CrumbSep $gap={4}>&gt;</CrumbSep>
              <CrumbLast>Medicare short-stay comparison to MedPAR</CrumbLast>
            </Crumbs>

            <FilterPanel>
              <FormTop>
                <FormCol $w={639}>
                  <FormRow $h={34}>
                    <FormLabel $top={3}>Report Title:</FormLabel>
                    <ReportName>Medicare short-stay comparison to MedPAR</ReportName>
                  </FormRow>
                  <FormRow $h={36}>
                    <FormLabel $top={3}>Short Stay Data Set:</FormLabel>
                    <SegGroup $h={26}>
                      <Seg $w={106} $on>One Day Stays</Seg>
                      <Seg $w={104}>Two Day Stays</Seg>
                      <Seg $w={153}>One and Two Day Stays</Seg>
                    </SegGroup>
                  </FormRow>
                  <FormRow $h={36}>
                    <FormLabel $top={0}>Selected MedPAR benchmark:</FormLabel>
                    <SegGroup $h={26}>
                      <Seg $w={78} $on>Over 80th</Seg>
                      <Seg $w={76}>Over 50th</Seg>
                      <Seg $w={87}>Under 50th</Seg>
                      <Seg $w={86}>Under 20th</Seg>
                    </SegGroup>
                  </FormRow>
                  <FormRow $h={33}>
                    <FormLabel $top={3}>Grouper Version:</FormLabel>
                    <GrouperInput>(All)</GrouperInput>
                  </FormRow>
                </FormCol>
                <FormCol $w={560}>
                  <FormRow $h={36}>
                    <FormLabel $w={236} $top={3}>DRG Type:</FormLabel>
                    <SegGroup $h={27}>
                      <Seg $w={39} $on>All</Seg>
                      <Seg $w={121}>Vulnerable DRGs</Seg>
                    </SegGroup>
                  </FormRow>
                  <FormRow $h={34}>
                    <FormLabel $w={236} $top={1}>Number of DRGs to Display:</FormLabel>
                    <Spinner>
                      <SpinValue>10</SpinValue>
                      <SpinArrows>
                        <ChevronUp size={12} strokeWidth={1.5} />
                        <ChevronDown size={12} strokeWidth={1.5} />
                      </SpinArrows>
                    </Spinner>
                  </FormRow>
                  <FormRow $h={38}>
                    <FormLabel $w={236} $top={0}>Trend by:</FormLabel>
                    <SegGroup $h={27} $top={2}>
                      <Seg $w={59} $on>Month</Seg>
                      <Seg $w={66}>Quarter</Seg>
                    </SegGroup>
                  </FormRow>
                </FormCol>
              </FormTop>
              <SliderRow>
                <SliderLabel>Date Range:</SliderLabel>
                <SliderBox>
                  <SliderTip $left={717} $w={45}>Jul 18</SliderTip>
                  <SliderTip $left={1030} $w={49}>Jun 19</SliderTip>
                  <SliderScale />
                </SliderBox>
                <SearchButton>Search</SearchButton>
              </SliderRow>
            </FilterPanel>

            <DotsRow><DotsButton><i /><i /><i /></DotsButton></DotsRow>

            <Legend>
              <LegendItem $w={228} $ls={0.12}><LegendMark $color="#dc5069" />Number Cases Above 80th Percentile</LegendItem>
              <LegendItem $w={159}><LegendMark $color="#e98c00" />One Day Stay Percentage</LegendItem>
              <LegendItem><LegendMark $color="#b52a30" />MedPAR 80th Percentile</LegendItem>
            </Legend>

            <ChartArea />

            <InfoBlock>
              <InfoRow><InfoKey $w={80}>Facilities:</InfoKey><InfoValue>Enterprise</InfoValue></InfoRow>
              <InfoRow><InfoKey $w={81}>Payer:</InfoKey><InfoValue>Medicare</InfoValue></InfoRow>
              <InfoRow><InfoKey $w={83}>Date Range:</InfoKey><InfoValue>Disch Date Between 07/01/2018 - 06/02/2019</InfoValue></InfoRow>
              <InfoRow><InfoKey $w={83}>Groupers:</InfoKey><InfoValue>Florida Blue Cross,2009, MS Version 32, 2015 (v32), MS Version 33, 2016 (v33), Georgia MS Grouper (v33), MS Version 34, 2017 (v34), MS Version 35, 2018 (v35), MS Version 36, 2019 (v36)</InfoValue></InfoRow>
              <InfoRow><InfoKey $w={82}>Excludes:</InfoKey><InfoValue>Transfers(2, 5, 43, 65, 66), AMA(7), Expired(20), Planned Readmissions (81 - 95)</InfoValue></InfoRow>
              <InfoRow><InfoKey $w={83}>Source:</InfoKey><InfoValue>Latest available national MedPAR data</InfoValue></InfoRow>
            </InfoBlock>
            <MainFoot>
              <PwcLogo />
              <Version>SMART<sup>®</sup> 5.6.157</Version>
            </MainFoot>
          </Main>
        </BodyRow>

        <Legal>© 2019 PricewaterhouseCoopers LLP, a Delaware limited liability partnership. All rights reserved. PwC refers to the US member firm, and may sometimes refer to the PwC network. Each member firm is a separate legal entity. Please see www.pwc.com/structure for further details.</Legal>
      </Page>
      <PageScroll>
        <PageArrow><ChevronUp size={13} strokeWidth={3} /></PageArrow>
        <PageThumb />
        <PageArrow $top={40}><ChevronDown size={13} strokeWidth={3} /></PageArrow>
      </PageScroll>
    </PageArea>

    <Taskbar>
      {taskItems.map(({ Icon, running, active }, i) => (
        <TaskSlot key={i} $running={running} $active={active}><Icon /></TaskSlot>
      ))}
      <Tray>
        <TrayIcon $w={31}><ChevronUp size={16} strokeWidth={1.3} /></TrayIcon>
        <TrayIcon $w={33}>
          <svg width="16" height="15" viewBox="0 0 16 18" fill="none" stroke="#fff">
            <rect x="2" y="6" width="12" height="10" fill="#fff" />
            <path d="M5 6V1M9 6V1" />
          </svg>
        </TrayIcon>
        <TrayIcon $w={31}>
          <svg width="17" height="16" viewBox="0 0 17 18" fill="none" stroke="#fff">
            <rect x="6" y="1" width="10" height="11" />
            <path d="M1 16h8M5 12v4" />
          </svg>
        </TrayIcon>
        <TrayIcon $w={32}>
          <svg width="17" height="15" viewBox="0 0 17 16" fill="none" stroke="#fff">
            <path d="M1 5h3l4-4v14l-4-4H1z" />
            <path d="M11 6l4 4M15 6l-4 4" />
          </svg>
        </TrayIcon>
        <TrayIcon $w={34}>ENG</TrayIcon>
        <Clock>8:19 PM<br />6/2/2019</Clock>
        <TrayNote>
          <svg width="24" height="30" viewBox="0 0 24 30">
            <path d="M1 2h15v14H8l-3 3v-3H1z" fill="#fff" />
            <circle cx="15" cy="20" r="8.500" fill="#0e8a9c" />
            <text x="15" y="24.500" fontSize="12" textAnchor="middle" fill="#fff">1</text>
          </svg>
        </TrayNote>
      </Tray>
    </Taskbar>
  </Screen>
);

export default App;
